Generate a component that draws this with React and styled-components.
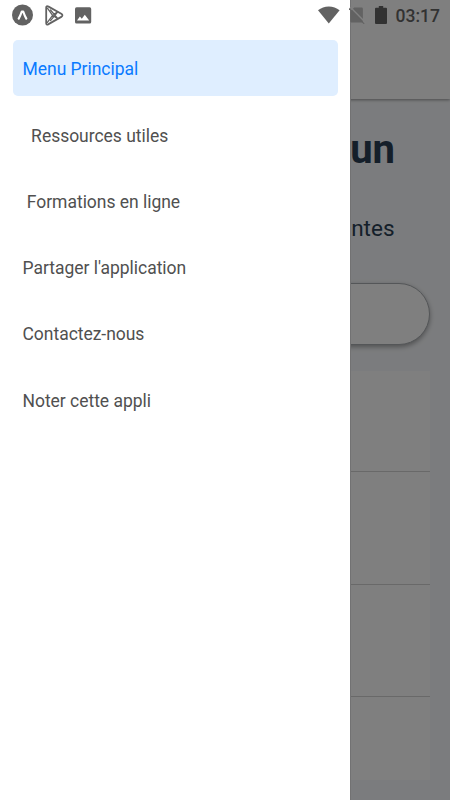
import React, { useState } from 'react';
import styled, { createGlobalStyle } from 'styled-components';

const menuItems = [
  'Menu Principal',
  '  Ressources utiles',
  ' Formations en ligne',
  "Partager l'application",
  'Contactez-nous',
  'Noter cette appli',
];

export default function App() {
  const [active, setActive] = useState(0);

  return (
    <Screen>
      <GlobalStyle />
      <Page>
        <Header />
        <Content>
          <Title>un</Title>
          <Subtitle>entes</Subtitle>
          <SearchField />
          <List>
            <ListRow $height={101} />
            <ListRow $height={113} />
            <ListRow $height={112} />
            <ListRow $height={83} $last />
          </List>
        </Content>
      </Page>
      <Scrim />
      <Drawer>
        {menuItems.map((label, index) => (
          <DrawerItem
            key={label}
            $active={index === active}
            onClick={() => setActive(index)}
          >
            {label}
          </DrawerItem>
        ))}
      </Drawer>
      <StatusBar>
        <StatusLeft>
          <ExpoIcon />
          <PlayIcon />
          <ImageIcon />
        </StatusLeft>
        <StatusRight>
          <WifiIcon />
          <NoSimIcon />
          <BatteryIcon />
          <Clock>03:17</Clock>
        </StatusRight>
      </StatusBar>
    </Screen>
  );
}

function ExpoIcon() {
  return (
    <svg width="22" height="22" viewBox="0 0 22 22">
      <circle cx="10.5" cy="11" r="10.5" fill="#626262" />
      <path
        d="M6.7 14.6C8 12.6 9 9.8 9.8 7.5H11.2C12 9.8 13 12.6 14.3 14.6"
        fill="none"
        stroke="#fff"
        strokeWidth="2.2"
        strokeLinecap="round"
        strokeLinejoin="round"
      />
    </svg>
  );
}

function PlayIcon() {
  return (
    <svg width="19" height="21" viewBox="0 0 19 21">
      <g
        fill="none"
        stroke="#626262"
        strokeLinecap="round"
        strokeLinejoin="round"
      >
        <path
          d="M1.2 2.5C1.2 1.2 2.1 .8 3.1 1.4L16.3 8.8C17.8 9.7 17.8 11 16.3 11.9L3.1 19.4C2.1 20 1.2 19.5 1.2 18.3Z"
          strokeWidth="1.8"
        />
        <path
          d="M2.4 3.2L7.6 10.3L2.4 17.4M7.6 10.3L12.6 6.9M7.6 10.3L12.6 13.8M5.5 5L12.4 13.2M5.5 15.6L12.4 7.4"
          strokeWidth="1.3"
        />
      </g>
    </svg>
  );
}

function ImageIcon() {
  return (
    <svg width="17" height="17" viewBox="0 0 17 17">
      <rect x="0" y=".3" width="16.2" height="16.2" rx="1.6" fill="#626262" />
      <path
        d="M2 13.6L4.9 9.4L6.8 11.8L9.8 7.8L14.2 13.6Z"
        fill="#fff"
      />
    </svg>
  );
}

function WifiIcon() {
  return (
    <svg width="22" height="18" viewBox="0 0 22 18">
      <path
        d="M0 4.3C3.1 1.7 6.7 .4 10.8 .4S18.5 1.7 21.6 4.3L10.8 17.6Z"
        fill="#626262"
      />
    </svg>
  );
}

function NoSimIcon() {
  return (
    <svg width="17" height="17" viewBox="0 0 17 17">
      <path
        d="M5.2 .6H12.6Q13.9 .6 13.9 2V15.5H2.4Q1.2 15.5 1.2 14.1V4.6Z"
        fill="#626262"
      />
      <path d="M1.2 0L17 16" stroke="#808080" strokeWidth="1.4" />
      <path d="M-.6 .9L15.2 16.8" stroke="#626262" strokeWidth="1.2" />
    </svg>
  );
}

function BatteryIcon() {
  return (
    <svg width="12" height="18" viewBox="0 0 12 18">
      <path
        d="M3.8 0H8.2V1.8H11Q12 1.8 12 2.8V17Q12 18 11 18H1Q0 18 0 17V2.8Q0 1.8 1 1.8H3.8Z"
        fill="#323232"
      />
    </svg>
  );
}

const GlobalStyle = createGlobalStyle`
  * {
    box-sizing: border-box;
  }
  body {
    margin: 0;
    font-family: Roboto, sans-serif;
  }
`;

const Screen = styled.div`
  position: relative;
  width: 450px;
  height: 800px;
  overflow: hidden;
`;

const Page = styled.div`
  height: 100%;
  display: flex;
  flex-direction: column;
  background: #f7f9fc;
`;

const Header = styled.header`
  position: relative;
  height: 100px;
  background: #fff;
  box-shadow: 0 1px 3px rgba(0, 0, 0, 0.4);
`;

const Content = styled.main`
  flex: 1;
  display: flex;
  flex-direction: column;
  padding: 27px 20px 20px;
  color: #2a3f54;
`;

const Title = styled.h1`
  margin: 0;
  padding-right: 35px;
  font-size: 40px;
  font-weight: 700;
  line-height: 47px;
  text-align: right;
`;

const Subtitle = styled.p`
  margin: 41px 0 0;
  padding-right: 35.5px;
  font-size: 22.5px;
  line-height: 28px;
  text-align: right;
`;

const SearchField = styled.div`
  height: 62px;
  margin-top: 41px;
  border: 1px solid #a8acb0;
  border-radius: 31px;
  background: #fff;
  box-shadow: 0 2px 5px rgba(0, 0, 0, 0.35);
`;

const List = styled.div`
  margin-top: 26px;
`;

const ListRow = styled.div`
  height: ${({ $height }) => $height}px;
  background: #fff;
  border-bottom: ${({ $last }) => ($last ? 'none' : '1px solid #d2d2d2')};
`;

const Scrim = styled.div`
  position: absolute;
  inset: 0;
  background: rgba(0, 0, 0, 0.5);
`;

const Drawer = styled.nav`
  position: absolute;
  top: 0;
  left: 0;
  width: 350px;
  height: 100%;
  display: flex;
  flex-direction: column;
  gap: 10.25px;
  padding: 40px 12.5px 0;
  background: #fff;
  box-shadow: 1px 0 0 #727273;
`;

const DrawerItem = styled.button`
  height: 56px;
  flex-shrink: 0;
  padding: 2.6px 10px 0;
  border: 0;
  border-radius: 5px;
  background: ${({ $active }) => ($active ? '#dfeeff' : 'transparent')};
  color: ${({ $active }) => ($active ? '#0a7aff' : '#505050')};
  font: 400 17.5px Roboto, sans-serif;
  letter-spacing: -0.03px;
  text-align: left;
  white-space: pre;
`;

const StatusBar = styled.div`
  position: absolute;
  top: 0;
  left: 0;
  width: 100%;
  height: 30px;
  display: flex;
  align-items: center;
  justify-content: space-between;
  padding: 0 10px 0 12px;
`;

const StatusLeft = styled.div`
  display: flex;
  align-items: center;
  gap: 11px;
`;

const StatusRight = styled.div`
  display: flex;
  align-items: center;
  gap: 9px;
`;

const Clock = styled.span`
  padding-top: 2px;
  color: #323232;
  font-size: 17.5px;
  font-weight: 500;
`;
